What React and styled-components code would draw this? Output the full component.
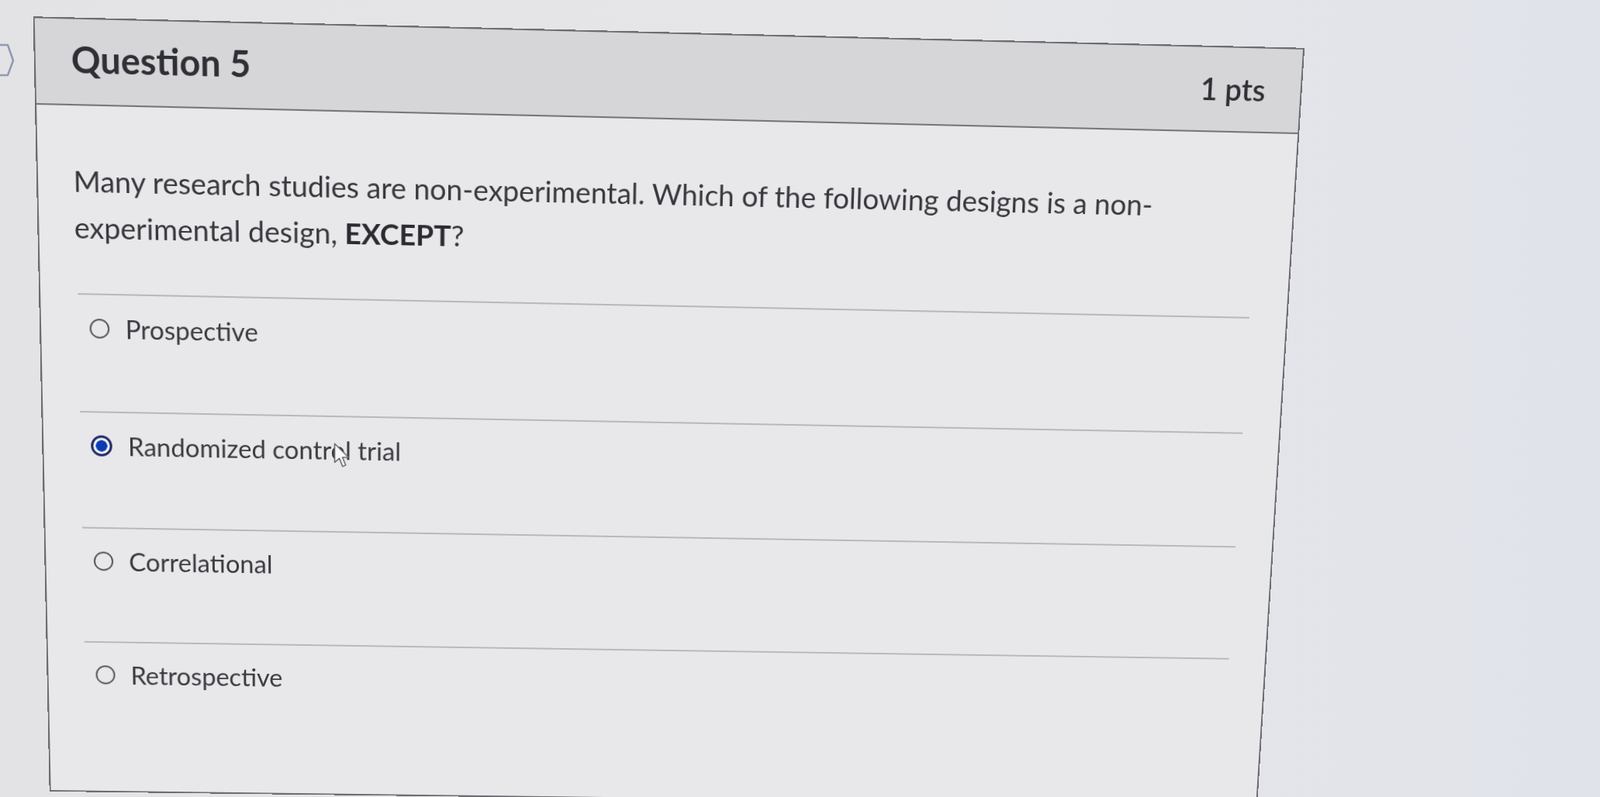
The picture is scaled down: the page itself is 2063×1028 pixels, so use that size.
import React from "react";
import styled, { createGlobalStyle } from "styled-components";

const GlobalStyle = createGlobalStyle`
  html, body {
    margin: 0;
    padding: 0;
    overflow: hidden;
    background: #e4e4e6;
  }
  * {
    box-sizing: border-box;
  }
`;

const Page = styled.div`
  position: relative;
  width: 100vw;
  height: 100vh;
  overflow: hidden;
  padding: 52px 0 0 61px;
  font-family: "Lato", "Liberation Sans", sans-serif;
  background: linear-gradient(90deg, #e3e3e5 0%, #e6e6e8 55%, #e0e3ea 100%);
`;

const EdgeTab = styled.svg`
  position: absolute;
  left: 0;
  top: 56px;
`;

// the photo was taken at a slight angle, so the whole card is tilted
const Card = styled.div`
  width: 1598px;
  height: 994px;
  border: 2px solid #6c6d72;
  background: #e8e8ea;
  transform-origin: 50% 50%;
  transform: perspective(2000px) rotateX(-6deg) rotateY(1.3deg) rotate(1.2deg);
`;

const Header = styled.div`
  height: 106px;
  display: flex;
  align-items: baseline;
  justify-content: space-between;
  padding: 22px 45px 0 44px;
  background: #d6d6d8;
  border-bottom: 2px solid #75767b;
`;

const Title = styled.h2`
  margin: 0;
  font-size: 45px;
  font-weight: 700;
  line-height: 1.2;
  color: #2f3035;
`;

const Points = styled.div`
  font-size: 38px;
  font-weight: 600;
  line-height: 1.2;
  color: #2f3035;
`;

const Body = styled.div`
  padding: 64px 48px 0 44px;
`;

const QuestionText = styled.p`
  margin: 0 0 54px;
  font-size: 36.6px;
  line-height: 58px;
  color: #37383d;

  strong {
    font-weight: 700;
    color: #2b2c31;
  }
`;

const Answers = styled.div`
  display: flex;
  flex-direction: column;
  margin-left: 3px;
`;

const Answer = styled.label`
  position: relative;
  height: 150px;
  display: flex;
  align-items: center;
  padding: 0 0 0 14px;
  border-top: 2px solid #b7b8bb;
`;

const AnswerLine = styled.div`
  display: flex;
  align-items: center;
  gap: 20px;
  margin-top: -63px;
`;

const Radio = styled.span`
  flex: none;
  width: ${(p) => (p.checked ? "27px" : "25px")};
  height: ${(p) => (p.checked ? "27px" : "25px")};
  margin-left: ${(p) => (p.checked ? "-1px" : "0")};
  border-radius: 50%;
  border: ${(p) => (p.checked ? "3.5px solid #1d2767" : "2px solid #55565c")};
  background: ${(p) =>
    p.checked ? "radial-gradient(circle, #0c3cb0 0 7px, #f4f4f6 7.5px)" : "transparent"};
`;

const AnswerText = styled.span`
  font-size: 32.6px;
  line-height: 40px;
  color: #3a3b40;
`;

const Pointer = styled.svg`
  position: absolute;
  left: 322px;
  top: 33px;
`;

const answers = [
  { text: "Prospective" },
  { text: "Randomized control trial", checked: true },
  { text: "Correlational" },
  { text: "Retrospective" },
];

const App = () => {
  return (
    <Page>
      <GlobalStyle />
      <EdgeTab width="24" height="44" viewBox="0 0 24 44">
        <polyline
          points="0,2 10,2 17,22 10,41 0,41"
          fill="none"
          stroke="#8f9ab2"
          strokeWidth="2.5"
          strokeLinejoin="round"
        />
      </EdgeTab>
      <Card>
        <Header>
          <Title>Question 5</Title>
          <Points>1 pts</Points>
        </Header>
        <Body>
          <QuestionText>
            Many research studies are non-experimental. Which of the following designs is a non-
            <br />
            experimental design, <strong>EXCEPT</strong>?
          </QuestionText>
          <Answers>
            {answers.map((a) => (
              <Answer key={a.text}>
                <AnswerLine>
                  <Radio checked={a.checked} />
                  <AnswerText>{a.text}</AnswerText>
                </AnswerLine>
                {a.checked && (
                  <Pointer width="24" height="34" viewBox="0 0 18 26">
                    <path
                      d="M1 1 L1 19.5 L5.6 15.4 L8.8 23.4 L11.8 22.1 L8.6 14.3 L14.6 14.3 Z"
                      fill="#f7f7f8"
                      stroke="#6a6b70"
                      strokeWidth="1.2"
                      strokeLinejoin="round"
                    />
                  </Pointer>
                )}
              </Answer>
            ))}
          </Answers>
        </Body>
      </Card>
    </Page>
  );
};

export default App;
